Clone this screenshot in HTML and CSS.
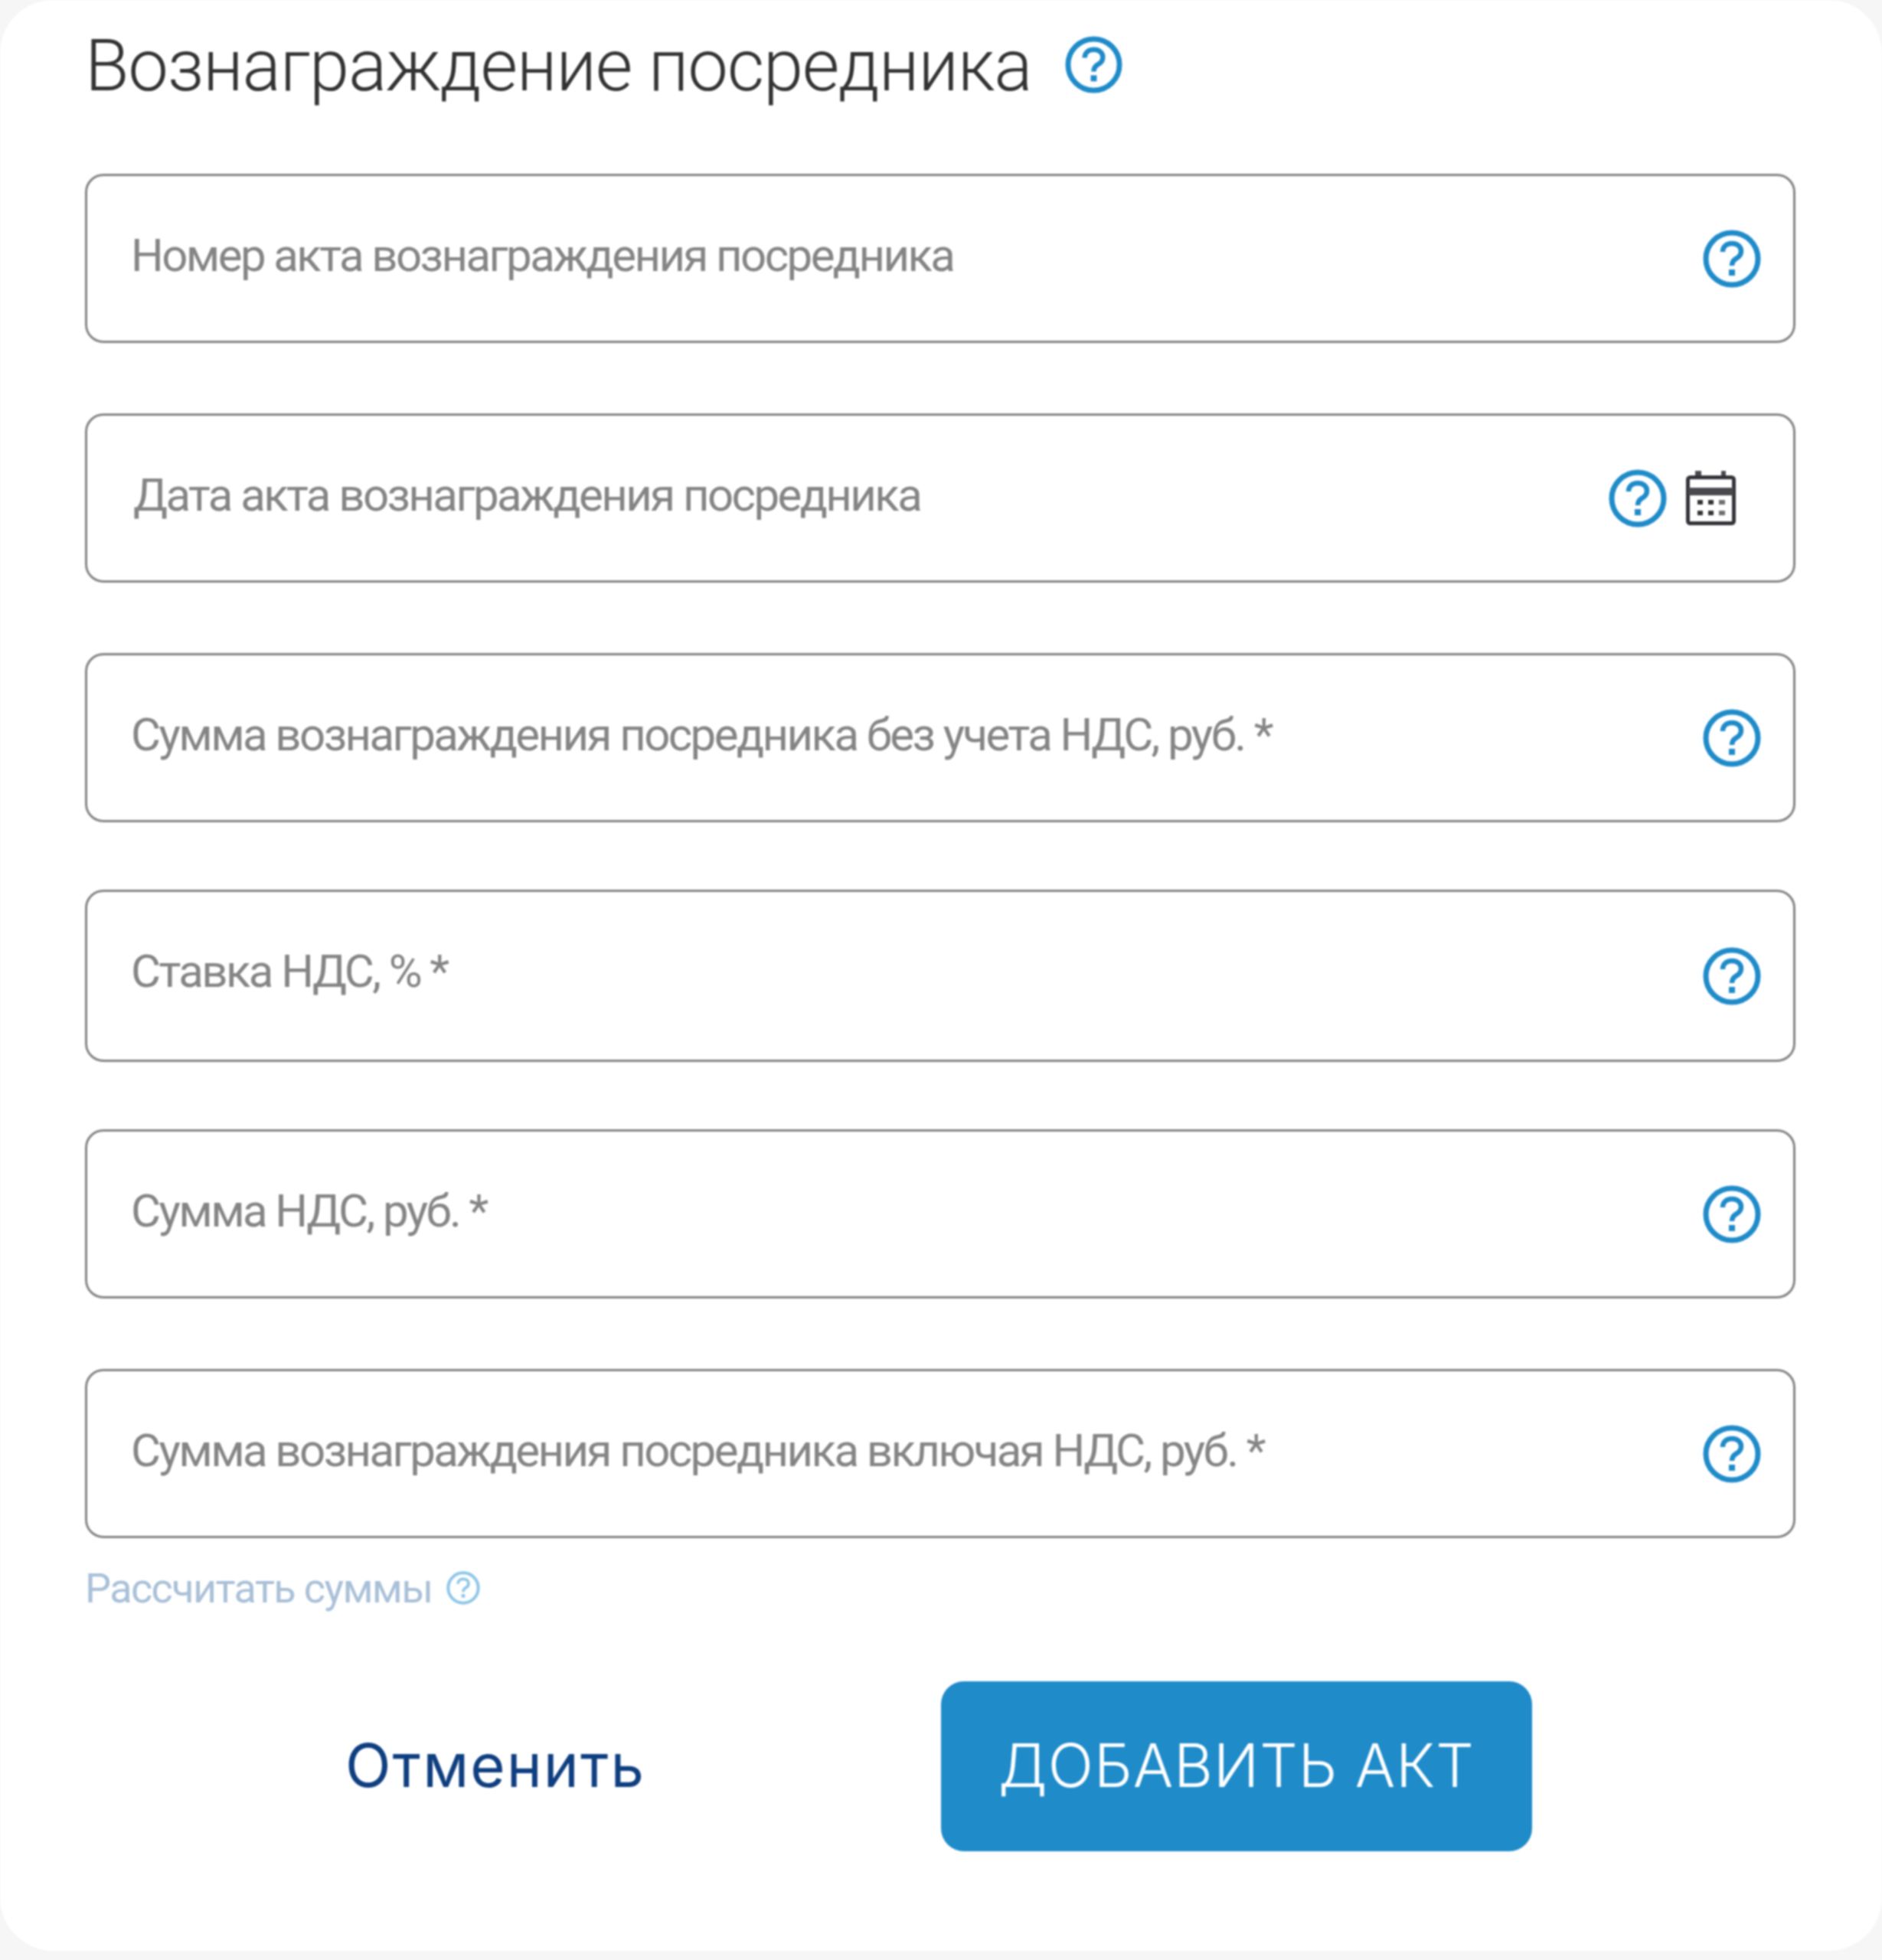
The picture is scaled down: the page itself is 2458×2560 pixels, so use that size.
FILE: index.html
```html
<!DOCTYPE html>
<html lang="ru">
<head>
  <meta charset="UTF-8" />
  <meta name="viewport" content="width=device-width, initial-scale=1.0"/>
  <title>Вознаграждение посредника</title>
  <link rel="stylesheet" href="styles.css">
</head>
<body>

  <svg class="defs" width="0" height="0">
    <symbol id="help" viewBox="0 0 76 76">
      <circle cx="38" cy="38" r="34" fill="none" stroke="currentColor" stroke-width="7"/>
      <path d="M26 29c0-7 5-11 12-11s12 4 12 10c0 5-3 8-7 10-3 2-5 4-5 9" fill="none" stroke="currentColor" stroke-width="6.500"/>
      <rect x="34" y="52" width="8" height="8" fill="currentColor"/>
    </symbol>
  </svg>

  <form class="card">
    <div class="card-head">
      <h2 class="card-title">Вознаграждение посредника</h2>
      <svg class="icon-help"><use href="#help"/></svg>
    </div>

    <div class="field field-first">
      <span class="placeholder">Номер акта вознаграждения посредника</span>
      <svg class="icon-help"><use href="#help"/></svg>
    </div>

    <div class="field field-date">
      <span class="placeholder placeholder-date">Дата акта вознаграждения посредника</span>
      <svg class="icon-help"><use href="#help"/></svg>
      <svg class="icon-calendar" viewBox="0 0 65 72">
        <rect x="12" y="0" width="8" height="10" fill="#4a4a4e"/>
        <rect x="46" y="0" width="6" height="10" fill="#4a4a4e"/>
        <rect x="2.500" y="8.500" width="60" height="60" rx="3" fill="#fff" stroke="#333338" stroke-width="5"/>
        <rect x="3" y="22" width="59" height="10" fill="#4a4a4e"/>
        <g fill="#333338">
          <rect x="15" y="38" width="7" height="6"/>
          <rect x="29" y="38" width="7" height="6"/>
          <rect x="43" y="38" width="8" height="6" opacity="0.7"/>
          <rect x="15" y="52" width="7" height="6"/>
          <rect x="29" y="52" width="7" height="6"/>
          <rect x="43" y="52" width="8" height="6" opacity="0.7"/>
        </g>
      </svg>
    </div>

    <div class="field">
      <span class="placeholder">Сумма вознаграждения посредника без учета НДС, руб. *</span>
      <svg class="icon-help"><use href="#help"/></svg>
    </div>

    <div class="field field-rate">
      <span class="placeholder">Ставка НДС, % *</span>
      <svg class="icon-help"><use href="#help"/></svg>
    </div>

    <div class="field field-after-rate">
      <span class="placeholder">Сумма НДС, руб. *</span>
      <svg class="icon-help"><use href="#help"/></svg>
    </div>

    <div class="field">
      <span class="placeholder">Сумма вознаграждения посредника включая НДС, руб. *</span>
      <svg class="icon-help"><use href="#help"/></svg>
    </div>

    <div class="calc">
      <span class="calc-link">Рассчитать суммы</span>
      <svg class="icon-help"><use href="#help"/></svg>
    </div>

    <div class="actions">
      <button type="button" class="btn btn-cancel">Отменить</button>
      <button type="button" class="btn btn-add">ДОБАВИТЬ АКТ</button>
    </div>
  </form>

</body>
</html>
```

FILE: styles.css
```css
body {
  margin: 0;
  height: 2560px;
  overflow: hidden;
  font-family: Roboto, 'Liberation Sans', sans-serif;
  background: #f6f6f6;
}

.defs {
  display: block;
}

.card {
  height: 2548px;
  box-sizing: border-box;
  padding: 0 113px 0 111px;
  background: #fff;
  border-radius: 70px;
  filter: blur(1.2px);
}

.card-head {
  display: flex;
  gap: 44px;
  height: 170px;
}

.card-title {
  margin: 0;
  font-size: 94px;
  font-weight: 300;
  letter-spacing: -1.3px;
  line-height: 172px;
  color: #333;
  white-space: nowrap;
}

.card-head .icon-help {
  margin-top: 47px;
  width: 75px;
  height: 75px;
}

.field {
  display: flex;
  align-items: center;
  gap: 20px;
  box-sizing: border-box;
  height: 221px;
  margin-top: 92px;
  padding: 0 42px 0 57px;
  border: 3px solid #858585;
  border-radius: 24px;
}

.field-first {
  margin-top: 57px;
}

.field-date {
  gap: 25px;
}

.field-rate {
  height: 225px;
  margin-top: 88px;
}

.field-rate .placeholder {
  margin-top: -12px;
}

.field-after-rate {
  margin-top: 88px;
}

.placeholder {
  flex: 1;
  margin-top: -8px;
  font-size: 60px;
  letter-spacing: -2.6px;
  color: #858585;
  white-space: nowrap;
}

.placeholder-date {
  padding-left: 3px;
}

.icon-help {
  flex: none;
  width: 76px;
  height: 76px;
  color: #1f8bc9;
}

.icon-calendar {
  flex: none;
  width: 65px;
  height: 72px;
  margin-right: 33px;
}

.calc {
  display: flex;
  align-items: center;
  gap: 18px;
  height: 66px;
  margin-top: 32px;
}

.calc-link {
  font-size: 54px;
  letter-spacing: -1.6px;
  color: #a9c0d8;
}

.calc .icon-help {
  width: 44px;
  height: 44px;
  color: #8fc7e8;
}

.actions {
  display: flex;
  gap: 196px;
  margin-top: 89px;
  padding-left: 150px;
}

.btn {
  width: 772px;
  height: 222px;
  padding: 0 0 3px;
  border: none;
  border-radius: 30px;
  font-family: Inter, Roboto, sans-serif;
  font-size: 78px;
  cursor: pointer;
}

.btn-cancel {
  background: none;
  color: #0f3f80;
  font-weight: 400;
  letter-spacing: 2px;
}

.btn-add {
  background: #1f8bc9;
  color: #fff;
  font-weight: 300;
  letter-spacing: 1px;
}
```
